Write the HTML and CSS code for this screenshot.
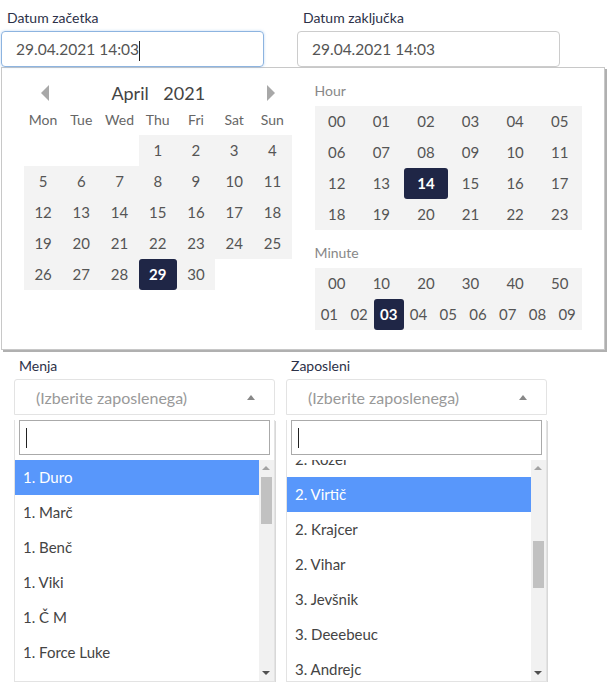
FILE: index.html
```html
<!DOCTYPE html>
<html lang="sl">
<head>
    <meta charset="UTF-8">
    <meta name="viewport" content="width=device-width, initial-scale=1.0">
    <title>Urnik</title>
    <link rel="stylesheet" href="styles.css">
</head>
<body>
    <div class="date-row">
        <div class="date-field">
            <label>Datum začetka</label>
            <div class="date-input focused">29.04.2021 14:03<span class="caret"></span></div>
        </div>
        <div class="date-field">
            <label>Datum zaključka</label>
            <div class="date-input">29.04.2021 14:03</div>
        </div>
    </div>

    <div class="picker">
        <div class="calendar">
            <div class="cal-head">
                <span class="arrow arrow-left"></span>
                <span class="cal-title">April <span class="cal-year">2021</span></span>
                <span class="arrow arrow-right"></span>
            </div>
            <div class="cal-grid">
                <div class="wd">Mon</div><div class="wd">Tue</div><div class="wd">Wed</div><div class="wd">Thu</div><div class="wd">Fri</div><div class="wd">Sat</div><div class="wd">Sun</div>
                <div class="empty"></div><div class="empty"></div><div class="empty"></div>
                <div class="day">1</div><div class="day">2</div><div class="day">3</div><div class="day">4</div>
                <div class="day">5</div><div class="day">6</div><div class="day">7</div><div class="day">8</div><div class="day">9</div><div class="day">10</div><div class="day">11</div>
                <div class="day">12</div><div class="day">13</div><div class="day">14</div><div class="day">15</div><div class="day">16</div><div class="day">17</div><div class="day">18</div>
                <div class="day">19</div><div class="day">20</div><div class="day">21</div><div class="day">22</div><div class="day">23</div><div class="day">24</div><div class="day">25</div>
                <div class="day">26</div><div class="day">27</div><div class="day">28</div><div class="day active">29</div><div class="day">30</div>
            </div>
        </div>

        <div class="time">
            <div class="time-label">Hour</div>
            <div class="hour-grid">
                <div>00</div><div>01</div><div>02</div><div>03</div><div>04</div><div>05</div>
                <div>06</div><div>07</div><div>08</div><div>09</div><div>10</div><div>11</div>
                <div>12</div><div>13</div><div class="active">14</div><div>15</div><div>16</div><div>17</div>
                <div>18</div><div>19</div><div>20</div><div>21</div><div>22</div><div>23</div>
            </div>
            <div class="time-label minute-label">Minute</div>
            <div class="minute-tens">
                <div>00</div><div>10</div><div>20</div><div>30</div><div>40</div><div>50</div>
            </div>
            <div class="minute-ones">
                <div>01</div><div>02</div><div class="active">03</div><div>04</div><div>05</div><div>06</div><div>07</div><div>08</div><div>09</div>
            </div>
        </div>
    </div>

    <div class="select-row">
        <div class="select-field">
            <label>Menja</label>
            <div class="select-box">
                <span class="placeholder">(Izberite zaposlenega)</span>
                <span class="select-arrow"></span>
            </div>
            <div class="dropdown">
                <div class="search"><span class="caret"></span></div>
                <div class="results">
                    <ul class="options">
                        <li class="highlighted">1. Duro</li>
                        <li>1. Marč</li>
                        <li>1. Benč</li>
                        <li>1. Viki</li>
                        <li>1. Č M</li>
                        <li>1. Force Luke</li>
                    </ul>
                    <div class="scrollbar">
                        <span class="sb-up"></span>
                        <span class="sb-thumb thumb-top"></span>
                        <span class="sb-down"></span>
                    </div>
                </div>
            </div>
        </div>
        <div class="select-field">
            <label>Zaposleni</label>
            <div class="select-box">
                <span class="placeholder">(Izberite zaposlenega)</span>
                <span class="select-arrow"></span>
            </div>
            <div class="dropdown">
                <div class="search"><span class="caret"></span></div>
                <div class="results">
                    <ul class="options scrolled">
                        <li>2. Rozei</li>
                        <li class="highlighted">2. Virtič</li>
                        <li>2. Krajcer</li>
                        <li>2. Vihar</li>
                        <li>3. Jevšnik</li>
                        <li>3. Deeebeuc</li>
                        <li>3. Andrejc</li>
                    </ul>
                    <div class="scrollbar">
                        <span class="sb-up"></span>
                        <span class="sb-thumb thumb-mid"></span>
                        <span class="sb-down"></span>
                    </div>
                </div>
            </div>
        </div>
    </div>
</body>
</html>
```

FILE: styles.css
```css
body {
    margin: 0;
    font-family: Lato, 'Noto Sans', sans-serif;
    color: #555;
    background: #fff;
}

label {
    display: block;
    font-size: 14px;
    color: #2c3148;
}

.date-row {
    display: flex;
    gap: 33px;
    padding: 9px 0 0 1px;
}

.date-field {
    width: 263px;
}

.date-field label {
    padding-left: 6px;
    height: 22px;
    line-height: 18px;
}

.date-input {
    height: 34px;
    line-height: 34px;
    border: 1px solid #ccc;
    border-radius: 4px;
    padding-left: 14px;
    font-size: 15.5px;
    color: #555;
}

.date-input.focused {
    border-color: #8db4e0;
    box-shadow: 0 0 3px rgba(102, 160, 230, 0.4);
}

.caret {
    display: inline-block;
    width: 1px;
    height: 20px;
    background: #222;
    vertical-align: middle;
}

/* datepicker popup */
.picker {
    display: flex;
    gap: 23px;
    width: 558px;
    margin-left: 1px;
    padding: 10px 22px 19px;
    border: 1px solid #c8c8c8;
    box-shadow: 2px 2px 0 #b0b0b0;
    background: #fff;
}

.calendar {
    width: 268px;
}

.cal-head {
    display: flex;
    align-items: center;
    justify-content: space-between;
    height: 30px;
    padding: 0 16px 0 17px;
}

.cal-title {
    font-size: 18px;
    color: #444;
}

.cal-year {
    margin-left: 10px;
}

.arrow {
    width: 0;
    height: 0;
    border-top: 8px solid transparent;
    border-bottom: 8px solid transparent;
}

.arrow-left {
    border-right: 8px solid #a8a8a8;
}

.arrow-right {
    border-left: 8px solid #a8a8a8;
}

.cal-grid {
    display: grid;
    grid-template-columns: repeat(7, 1fr);
    font-size: 15px;
    text-align: center;
}

.wd {
    height: 27px;
    line-height: 24px;
    font-size: 14px;
    color: #666;
}

.day,
.empty {
    height: 31px;
    line-height: 31px;
}

.day {
    background: #f3f3f3;
}

.active {
    background: #1f2646 !important;
    color: #fff;
    font-weight: bold;
    border-radius: 3px;
}

.time {
    width: 268px;
}

.time-label {
    font-size: 14px;
    color: #888;
    height: 20px;
    line-height: 20px;
    margin: 3px 0 5px;
}

.minute-label {
    margin-top: 13px;
}

.hour-grid,
.minute-tens,
.minute-ones {
    display: grid;
    background: #f3f3f3;
    font-size: 15px;
    text-align: center;
}

.hour-grid,
.minute-tens {
    grid-template-columns: repeat(6, 1fr);
}

.minute-ones {
    grid-template-columns: repeat(9, 1fr);
}

.hour-grid div,
.minute-tens div,
.minute-ones div {
    height: 31px;
    line-height: 31px;
}

/* employee selects */
.select-row {
    display: flex;
    gap: 11px;
    padding: 6px 0 0 14px;
}

.select-field {
    width: 261px;
}

.select-field label {
    padding-left: 5px;
    height: 23px;
    line-height: 20px;
}

.select-box {
    display: flex;
    align-items: center;
    justify-content: space-between;
    height: 34px;
    padding: 0 19px 0 21px;
    border: 1px solid #e3e3e3;
    border-radius: 3px 3px 0 0;
}

.placeholder {
    font-size: 16px;
    color: #999;
}

.select-arrow {
    width: 0;
    height: 0;
    border-left: 4px solid transparent;
    border-right: 4px solid transparent;
    border-bottom: 5px solid #888;
}

.dropdown {
    border: 1px solid #e3e3e3;
    border-top: none;
    box-shadow: 1px 1px 0 #d8d8d8;
}

.search {
    height: 33px;
    margin: 5px 4px 5px 4px;
    padding-left: 6px;
    border: 1px solid #aaa;
    display: flex;
    align-items: center;
}

.results {
    display: flex;
    height: 221px;
    overflow: hidden;
}

.options {
    flex: 1;
    list-style: none;
    margin: 0;
    padding: 0;
}

.options.scrolled {
    margin-top: -18px;
}

.options li {
    height: 35px;
    line-height: 35px;
    padding-left: 8px;
    font-size: 15px;
    color: #444;
}

.options li.highlighted {
    background: #5897fb;
    color: #fff;
}

.scrollbar {
    position: relative;
    width: 15px;
    background: #f1f1f1;
}

.sb-up,
.sb-down {
    position: absolute;
    left: 3px;
    width: 0;
    height: 0;
    border-left: 4px solid transparent;
    border-right: 4px solid transparent;
}

.sb-up {
    top: 6px;
    border-bottom: 4px solid #a3a3a3;
}

.sb-down {
    bottom: 6px;
    border-top: 4px solid #505050;
}

.sb-thumb {
    position: absolute;
    left: 2px;
    width: 11px;
    height: 47px;
    background: #c1c1c1;
}

.thumb-top {
    top: 17px;
}

.thumb-mid {
    top: 81px;
}
```
